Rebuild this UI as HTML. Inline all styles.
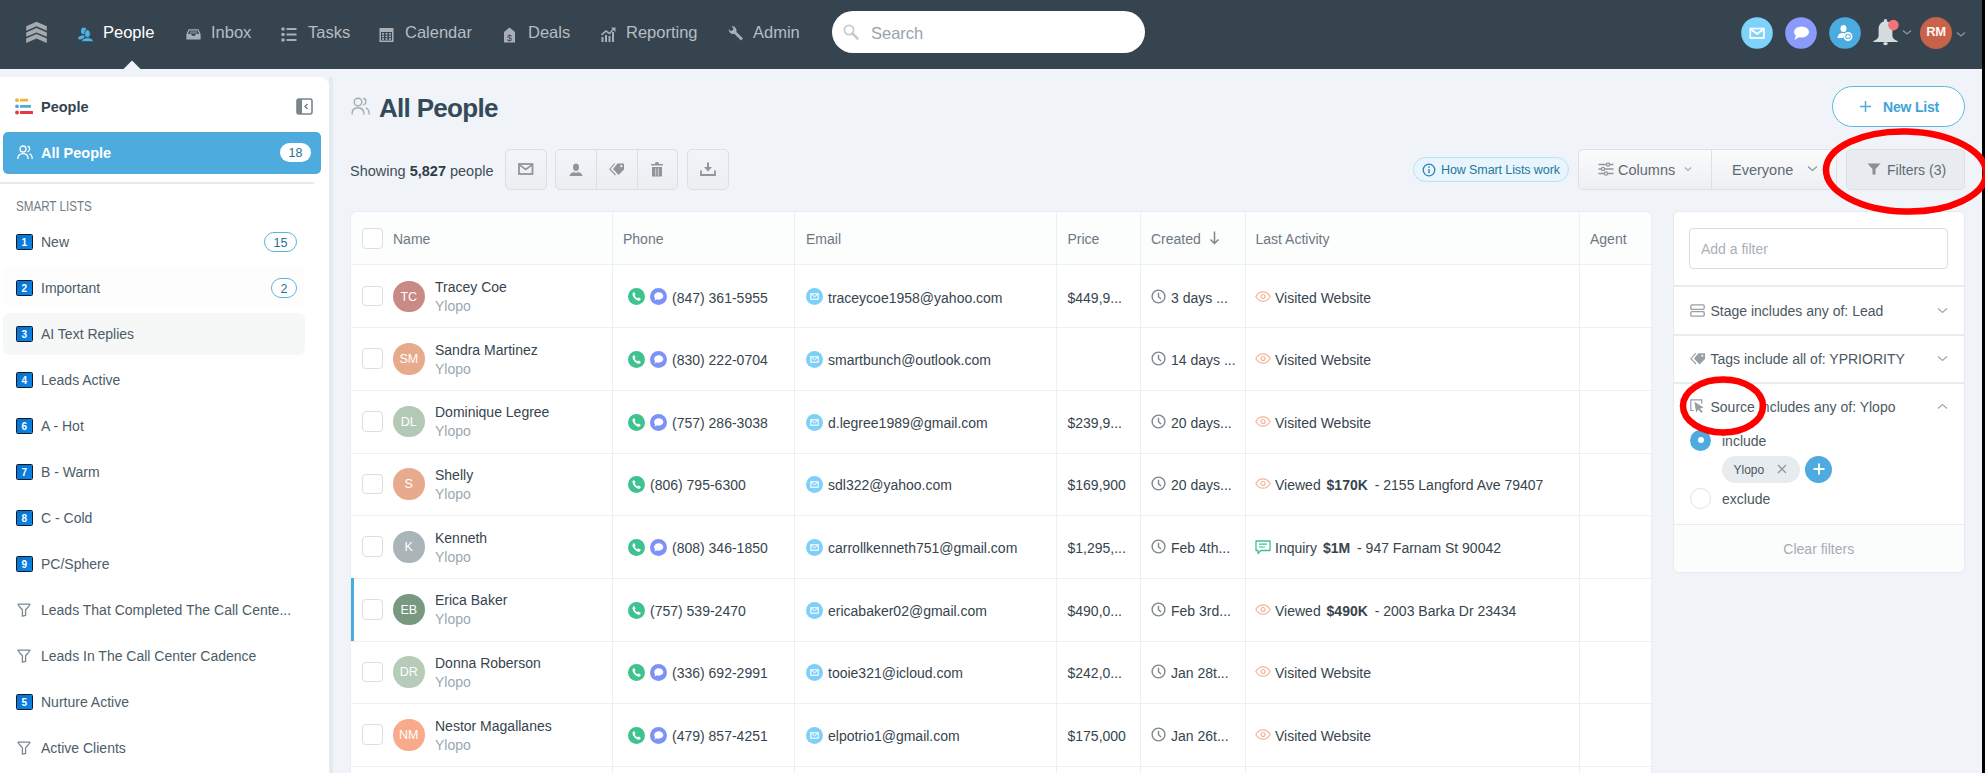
<!DOCTYPE html><html><head><meta charset="utf-8"><style>
*{box-sizing:border-box;margin:0;padding:0}
html,body{width:1985px;height:773px;overflow:hidden;background:#F0F3F8;font-family:"Liberation Sans", sans-serif;}
.a{position:absolute}
.t{position:absolute;white-space:nowrap;line-height:1}
b{font-weight:700}
</style></head><body>
<div class="a" style="left:0;top:0;width:1985px;height:69px;background:#36444F"></div>
<svg class="a" style="left:122px;top:59px" width="20" height="11"><polygon points="1,10.5 10,1.5 19,10.5" fill="#F0F3F8"/></svg>
<svg class="a" style="left:24px;top:20px" width="25" height="25" viewBox="0 0 25 25">
      <g fill="#A6AAAE">
      <path d="M2.2 6.3 L12.5 1.8 L22.8 6.3 L22.8 10.7 L12.5 6.3 L2.2 10.7Z"/>
      <path d="M2.2 12.4 L12.5 7.9 L22.8 12.4 L22.8 16.8 L12.5 12.4 L2.2 16.8Z"/>
      <path d="M2.2 18.5 L12.5 14.0 L22.8 18.5 L22.8 22.9 L12.5 18.5 L2.2 22.9Z"/>
      </g></svg>
<svg class="a" style="left:78px;top:27px" width="16" height="15" viewBox="0 0 16 15">
      <g fill="#4DB3E6">
      <ellipse cx="5.7" cy="3.9" rx="2.6" ry="3.3"/>
      <ellipse cx="3.4" cy="10.3" rx="3.4" ry="1.7" transform="rotate(-22 3.4 10.3)"/>
      <ellipse cx="9.4" cy="6.7" rx="2.9" ry="3.9" stroke="#36444F" stroke-width="0.8"/>
      <path d="M3.4 14.5 C4 11.8 6.5 10.7 9.4 10.7 C12.3 10.7 14.8 11.8 15.4 14.5Z" stroke="#36444F" stroke-width="0.6"/>
      </g></svg>
<div class="t" style="left:103px;top:24px;font-size:16.5px;color:#FFFFFF">People</div>
<svg class="a" style="left:186px;top:29px" width="15" height="11" viewBox="0 0 15 11">
      <path d="M2.6 0.3 H12.4 L14.6 5 V10.6 H0.4 V5Z" fill="#A9B0B5"/>
      <path d="M3.3 1.5 H11.7 L13.1 5 H9.9 C9.6 6.3 8.7 6.9 7.5 6.9 C6.3 6.9 5.4 6.3 5.1 5 H1.9Z" fill="#36444F"/>
      <rect x="3.9" y="2.6" width="7.2" height="0.9" fill="#A9B0B5"/><rect x="3.5" y="3.9" width="8" height="0.7" fill="#7E878D"/>
      </svg>
<div class="t" style="left:211px;top:24px;font-size:16.5px;color:#B5BDC3">Inbox</div>
<svg class="a" style="left:281px;top:27px" width="16" height="15" viewBox="0 0 16 15">
      <g fill="#A9B0B5"><circle cx="2" cy="2" r="1.8"/><circle cx="2" cy="7.5" r="1.8"/><circle cx="2" cy="13" r="1.8"/>
      <rect x="5.5" y="1" width="10" height="2"/><rect x="5.5" y="6.5" width="10" height="2"/><rect x="5.5" y="12" width="10" height="2"/></g></svg>
<div class="t" style="left:308px;top:24px;font-size:16.5px;color:#B5BDC3">Tasks</div>
<svg class="a" style="left:379px;top:27px" width="15" height="15" viewBox="0 0 15 15">
      <rect x="0.5" y="1" width="14" height="14" fill="#A9B0B5"/>
      <rect x="2" y="5" width="11" height="8.5" fill="#36444F"/>
      <g fill="#A9B0B5"><rect x="3" y="6" width="2" height="1.6"/><rect x="6.5" y="6" width="2" height="1.6"/><rect x="10" y="6" width="2" height="1.6"/>
      <rect x="3" y="8.6" width="2" height="1.6"/><rect x="6.5" y="8.6" width="2" height="1.6"/><rect x="10" y="8.6" width="2" height="1.6"/>
      <rect x="3" y="11.2" width="2" height="1.6"/><rect x="6.5" y="11.2" width="2" height="1.6"/><rect x="10" y="11.2" width="2" height="1.6"/></g>
      </svg>
<div class="t" style="left:405px;top:24px;font-size:16.5px;color:#B5BDC3">Calendar</div>
<svg class="a" style="left:503px;top:27px" width="13" height="16" viewBox="0 0 13 16">
      <path d="M6.5 0.5 L12 5 V15.5 H1 V5Z" fill="#A9B0B5"/>
      <text x="6.5" y="14" font-size="9" font-family="Liberation Sans" text-anchor="middle" fill="#36444F">$</text></svg>
<div class="t" style="left:528px;top:24px;font-size:16.5px;color:#B5BDC3">Deals</div>
<svg class="a" style="left:601px;top:27px" width="15" height="15" viewBox="0 0 15 15">
      <g fill="#A9B0B5"><rect x="0.5" y="10" width="2" height="5"/><rect x="4" y="8" width="2" height="7"/><rect x="7.5" y="9" width="2" height="6"/><rect x="11" y="5" width="2" height="10"/></g>
      <path d="M0.5 8 L5 4 L8.5 6.5 L13 1.5" stroke="#A9B0B5" stroke-width="1.6" fill="none"/><path d="M10 0.5 H14.5 V5Z" fill="#A9B0B5"/></svg>
<div class="t" style="left:626px;top:24px;font-size:16.5px;color:#B5BDC3">Reporting</div>
<svg class="a" style="left:728px;top:26px" width="16" height="16" viewBox="0 0 16 16">
      <path d="M1 3 A4 4 0 0 0 6.3 7.7 L13 14.5 L15 12.5 L8.3 5.7 A4 4 0 0 0 3.5 0.5 L5.5 2.5 L4.5 4.5 L2.5 5Z" fill="#A9B0B5"/></svg>
<div class="t" style="left:753px;top:24px;font-size:16.5px;color:#B5BDC3">Admin</div>
<div class="a" style="left:832px;top:11px;width:313px;height:42px;border-radius:21px;background:#FFFFFF"></div>
<svg class="a" style="left:843px;top:24px" width="16" height="16" viewBox="0 0 16 16">
      <circle cx="6" cy="6" r="4.6" stroke="#C4CCD2" stroke-width="1.8" fill="none"/><path d="M9.5 9.5 L14.5 14.5" stroke="#C4CCD2" stroke-width="2.6" stroke-linecap="round"/></svg>
<div class="t" style="left:871px;top:25px;font-size:16.5px;color:#97A3AD">Search</div>
<svg class="a" style="left:1741px;top:16.5px" width="32" height="32" viewBox="0 0 32 32">
      <circle cx="16" cy="16" r="15.8" fill="#7FD3FB"/>
      <rect x="9.3" y="11.6" width="13.6" height="9.4" fill="none" stroke="#FFFFFF" stroke-width="1.7"/>
      <path d="M9.6 12.2 L16.1 16.8 L22.6 12.2" fill="none" stroke="#FFFFFF" stroke-width="1.8"/></svg>
<svg class="a" style="left:1785px;top:16.5px" width="32" height="32" viewBox="0 0 32 32">
      <circle cx="16" cy="16" r="15.8" fill="#8A9BFB"/>
      <ellipse cx="16.5" cy="15" rx="7.5" ry="5.5" fill="#FFFFFF"/><path d="M11 18 L9.5 23 L15 19.5Z" fill="#FFFFFF"/></svg>
<svg class="a" style="left:1829px;top:16.5px" width="32" height="32" viewBox="0 0 32 32">
      <circle cx="16" cy="16" r="15.8" fill="#4AABDE"/>
      <ellipse cx="14.5" cy="11.5" rx="3" ry="3.5" fill="#FFFFFF"/><path d="M8.5 21 C9 17 11 16 14.5 16 L16 16.5 L14 21Z" fill="#FFFFFF"/>
      <circle cx="19" cy="19.5" r="3.6" fill="none" stroke="#FFFFFF" stroke-width="1.8"/><path d="M19 17.5 V21.5 M17 19.5 H21" stroke="#FFFFFF" stroke-width="1.4"/></svg>
<svg class="a" style="left:1872px;top:18px" width="28" height="28" viewBox="0 0 28 28">
      <circle cx="13.5" cy="2.8" r="1.7" fill="#D6DBDE"/>
      <path d="M13.5 3.3 C8.8 3.3 6.6 7 6.6 11.5 V18 C6.6 20.5 4 22 1.3 23 V24 H25.7 V23 C23 22 20.4 20.5 20.4 18 V11.5 C20.4 7 18.2 3.3 13.5 3.3Z" fill="#D6DBDE"/>
      <ellipse cx="13.5" cy="25.6" rx="2.3" ry="1.7" fill="#D6DBDE"/>
      <circle cx="21.4" cy="7.1" r="5.3" fill="#F07479"/></svg>
<svg class="a" style="left:1902px;top:29px" width="10" height="7" viewBox="0 0 10 7"><path d="M1 1.5 L5 5 L9 1.5" stroke="#8E99A2" stroke-width="1.3" fill="none"/></svg>
<div class="a" style="left:1920px;top:16.5px;width:32px;height:32px;border-radius:50%;background:#C8624A"></div>
<div class="t" style="left:1920px;top:25px;width:32px;text-align:center;font-size:13px;font-weight:700;color:#FFF6F0;letter-spacing:-0.4px">RM</div>
<svg class="a" style="left:1956px;top:31px" width="10" height="7" viewBox="0 0 10 7"><path d="M1 1.5 L5 5 L9 1.5" stroke="#8E99A2" stroke-width="1.3" fill="none"/></svg>
<div class="a" style="left:1982px;top:0;width:3px;height:773px;background:#000000"></div>
<div class="a" style="left:329px;top:77px;width:4px;height:696px;background:#E6E9EE"></div>
<div class="a" style="left:0;top:77px;width:329px;height:696px;background:#FFFFFF;border-top-right-radius:9px"></div>
<svg class="a" style="left:15px;top:98px" width="18" height="17" viewBox="0 0 18 17">
      <circle cx="2" cy="2.2" r="1.9" fill="#F4B22E"/><rect x="5" y="0.8" width="8" height="2.8" rx="0.5" fill="#F4B22E"/>
      <circle cx="2" cy="8.3" r="1.9" fill="#4BABDD"/><rect x="5" y="6.9" width="11" height="2.8" rx="0.5" fill="#4BABDD"/>
      <circle cx="2" cy="14.5" r="1.9" fill="#E5383B"/><rect x="5" y="13.1" width="13" height="2.8" rx="0.5" fill="#E5383B"/></svg>
<div class="t" style="left:41px;top:100px;font-size:14.5px;font-weight:700;color:#34434E">People</div>
<svg class="a" style="left:296px;top:98px" width="17" height="17" viewBox="0 0 17 17">
      <rect x="1" y="1" width="15" height="15" rx="2" fill="none" stroke="#78858E" stroke-width="1.6"/>
      <rect x="1" y="1" width="5" height="15" fill="#78858E"/>
      <path d="M11.5 6 L9 8.5 L11.5 11" fill="none" stroke="#78858E" stroke-width="1.5"/></svg>
<div class="a" style="left:3px;top:131.5px;width:318px;height:42px;background:#4EABDD;border-radius:5px"></div>
<svg class="a" style="left:17px;top:145px" width="16" height="15" viewBox="0 0 16 15">
      <g fill="none" stroke="#FFFFFF" stroke-width="1.3"><circle cx="6" cy="4" r="3"/><path d="M0.8 14 C0.8 10 3 8.6 6 8.6 C9 8.6 11.2 10 11.2 14"/>
      <path d="M10.5 1.2 C12.2 1.6 12.8 3 12.6 4.2 C12.4 5.6 11.5 6.6 10.5 6.9"/><path d="M12.5 8.8 C14.3 9.5 15.2 11 15.2 14"/></g></svg>
<div class="t" style="left:41px;top:146px;font-size:14.5px;font-weight:700;color:#FFFFFF">All People</div>
<div class="a" style="left:280px;top:143px;width:31px;height:19px;border-radius:10px;background:#FFFFFF"></div>
<div class="t" style="left:280px;top:147px;width:31px;text-align:center;font-size:12.5px;color:#2D6F90">18</div>
<div class="a" style="left:0;top:182px;width:314px;height:2px;background:#E8EBEE"></div>
<div class="t" style="left:16px;top:198.6px;font-size:14px;color:#6E7D88;transform:scaleX(0.83);transform-origin:0 0">SMART LISTS</div>
<div class="a" style="left:3px;top:267px;width:302px;height:41px;background:#FDFDFD;border-radius:6px"></div>
<div class="a" style="left:3px;top:313px;width:302px;height:42px;background:#F6F7F7;border-radius:6px"></div>
<div class="a" style="left:16px;top:233.5px;width:16.5px;height:16.5px;background:linear-gradient(135deg,#0A6FC9,#0A86EC);border:1.2px solid #0F1A26;border-radius:1.5px;"></div><div class="t" style="left:16px;top:237.7px;width:16.5px;text-align:center;font-size:10px;font-weight:700;color:#FFFFFF">1</div>
<div class="t" style="left:41px;top:235.2px;font-size:14px;color:#4C5C68">New</div>
<div class="a" style="left:264px;top:232px;width:33px;height:20px;border-radius:10px;border:1.5px solid #5BB3DF;background:#FFFFFF"></div>
<div class="t" style="left:264px;top:236.5px;width:33px;text-align:center;font-size:12.5px;color:#2D6F90">15</div>
<div class="a" style="left:16px;top:279.5px;width:16.5px;height:16.5px;background:linear-gradient(135deg,#0A6FC9,#0A86EC);border:1.2px solid #0F1A26;border-radius:1.5px;"></div><div class="t" style="left:16px;top:283.7px;width:16.5px;text-align:center;font-size:10px;font-weight:700;color:#FFFFFF">2</div>
<div class="t" style="left:41px;top:281.2px;font-size:14px;color:#4C5C68">Important</div>
<div class="a" style="left:271px;top:278px;width:26px;height:20px;border-radius:10px;border:1.5px solid #5BB3DF;background:#FFFFFF"></div>
<div class="t" style="left:271px;top:282.5px;width:26px;text-align:center;font-size:12.5px;color:#2D6F90">2</div>
<div class="a" style="left:16px;top:325.5px;width:16.5px;height:16.5px;background:linear-gradient(135deg,#0A6FC9,#0A86EC);border:1.2px solid #0F1A26;border-radius:1.5px;"></div><div class="t" style="left:16px;top:329.7px;width:16.5px;text-align:center;font-size:10px;font-weight:700;color:#FFFFFF">3</div>
<div class="t" style="left:41px;top:327.2px;font-size:14px;color:#4C5C68">AI Text Replies</div>
<div class="a" style="left:16px;top:371.5px;width:16.5px;height:16.5px;background:linear-gradient(135deg,#0A6FC9,#0A86EC);border:1.2px solid #0F1A26;border-radius:1.5px;"></div><div class="t" style="left:16px;top:375.7px;width:16.5px;text-align:center;font-size:10px;font-weight:700;color:#FFFFFF">4</div>
<div class="t" style="left:41px;top:373.2px;font-size:14px;color:#4C5C68">Leads Active</div>
<div class="a" style="left:16px;top:417.5px;width:16.5px;height:16.5px;background:linear-gradient(135deg,#0A6FC9,#0A86EC);border:1.2px solid #0F1A26;border-radius:1.5px;"></div><div class="t" style="left:16px;top:421.7px;width:16.5px;text-align:center;font-size:10px;font-weight:700;color:#FFFFFF">6</div>
<div class="t" style="left:41px;top:419.2px;font-size:14px;color:#4C5C68">A - Hot</div>
<div class="a" style="left:16px;top:463.5px;width:16.5px;height:16.5px;background:linear-gradient(135deg,#0A6FC9,#0A86EC);border:1.2px solid #0F1A26;border-radius:1.5px;"></div><div class="t" style="left:16px;top:467.7px;width:16.5px;text-align:center;font-size:10px;font-weight:700;color:#FFFFFF">7</div>
<div class="t" style="left:41px;top:465.2px;font-size:14px;color:#4C5C68">B - Warm</div>
<div class="a" style="left:16px;top:509.5px;width:16.5px;height:16.5px;background:linear-gradient(135deg,#0A6FC9,#0A86EC);border:1.2px solid #0F1A26;border-radius:1.5px;"></div><div class="t" style="left:16px;top:513.7px;width:16.5px;text-align:center;font-size:10px;font-weight:700;color:#FFFFFF">8</div>
<div class="t" style="left:41px;top:511.2px;font-size:14px;color:#4C5C68">C - Cold</div>
<div class="a" style="left:16px;top:555.5px;width:16.5px;height:16.5px;background:linear-gradient(135deg,#0A6FC9,#0A86EC);border:1.2px solid #0F1A26;border-radius:1.5px;"></div><div class="t" style="left:16px;top:559.7px;width:16.5px;text-align:center;font-size:10px;font-weight:700;color:#FFFFFF">9</div>
<div class="t" style="left:41px;top:557.2px;font-size:14px;color:#4C5C68">PC/Sphere</div>
<svg class="a" style="left:17px;top:603px" width="14" height="14" viewBox="0 0 14 14"><path d="M1 1.2 H13 C12.5 3 10 5 8.6 6.8 V12.3 L5.4 13.2 V6.8 C4 5 1.5 3 1 1.2Z" fill="none" stroke="#7A8891" stroke-width="1.3" stroke-linejoin="round"/></svg>
<div class="t" style="left:41px;top:603.2px;font-size:14px;color:#4C5C68">Leads That Completed The Call Cente...</div>
<svg class="a" style="left:17px;top:649px" width="14" height="14" viewBox="0 0 14 14"><path d="M1 1.2 H13 C12.5 3 10 5 8.6 6.8 V12.3 L5.4 13.2 V6.8 C4 5 1.5 3 1 1.2Z" fill="none" stroke="#7A8891" stroke-width="1.3" stroke-linejoin="round"/></svg>
<div class="t" style="left:41px;top:649.2px;font-size:14px;color:#4C5C68">Leads In The Call Center Cadence</div>
<div class="a" style="left:16px;top:693.5px;width:16.5px;height:16.5px;background:linear-gradient(135deg,#0A6FC9,#0A86EC);border:1.2px solid #0F1A26;border-radius:1.5px;"></div><div class="t" style="left:16px;top:697.7px;width:16.5px;text-align:center;font-size:10px;font-weight:700;color:#FFFFFF">5</div>
<div class="t" style="left:41px;top:695.2px;font-size:14px;color:#4C5C68">Nurture Active</div>
<svg class="a" style="left:17px;top:741px" width="14" height="14" viewBox="0 0 14 14"><path d="M1 1.2 H13 C12.5 3 10 5 8.6 6.8 V12.3 L5.4 13.2 V6.8 C4 5 1.5 3 1 1.2Z" fill="none" stroke="#7A8891" stroke-width="1.3" stroke-linejoin="round"/></svg>
<div class="t" style="left:41px;top:741.2px;font-size:14px;color:#4C5C68">Active Clients</div>
<svg class="a" style="left:351px;top:97px" width="19" height="18" viewBox="0 0 19 18">
      <g fill="none" stroke="#A3ADB4" stroke-width="1.4"><circle cx="7" cy="5" r="3.8"/><path d="M1 17.5 C1 12.5 3.5 10.8 7 10.8 C10.5 10.8 13 12.5 13 17.5"/>
      <path d="M12.2 1.2 C14.3 1.7 15.1 3.4 14.9 4.9 C14.7 6.6 13.6 7.8 12.3 8.2"/><path d="M14.8 10.8 C17 11.7 18.2 13.6 18.2 17.5"/></g></svg>
<div class="t" style="left:379px;top:95px;font-size:26px;font-weight:700;color:#34495A;letter-spacing:-0.7px">All People</div>
<div class="a" style="left:1831.5px;top:85.5px;width:133px;height:41.5px;border-radius:21px;border:1.5px solid #5EB6E2;background:#FFFFFF"></div>
<svg class="a" style="left:1859px;top:100px" width="13" height="13" viewBox="0 0 13 13"><path d="M6.5 1 V12 M1 6.5 H12" stroke="#4BABDD" stroke-width="1.5"/></svg>
<div class="t" style="left:1883px;top:99.5px;font-size:14px;font-weight:700;color:#3FA3D8;letter-spacing:-0.2px">New List</div>
<div class="t" style="left:350px;top:163.5px;font-size:14.5px;color:#414E57">Showing <b style="color:#2F3D47">5,827</b> people</div>
<div class="a" style="left:505px;top:148.5px;width:41.5px;height:41px;background:linear-gradient(#F2F4F7,#ECEFF2);border:1.3px solid #DADFE4;border-radius:5px"></div>
<div class="a" style="left:555px;top:148.5px;width:123px;height:41px;background:linear-gradient(#F2F4F7,#ECEFF2);border:1.3px solid #DADFE4;border-radius:5px"></div>
<div class="a" style="left:596px;top:149px;width:1.3px;height:40px;background:#DADFE4"></div>
<div class="a" style="left:636.7px;top:149px;width:1.3px;height:40px;background:#DADFE4"></div>
<div class="a" style="left:687px;top:148.5px;width:41.5px;height:41px;background:linear-gradient(#F2F4F7,#ECEFF2);border:1.3px solid #DADFE4;border-radius:5px"></div>
<svg class="a" style="left:518px;top:163px" width="16" height="12" viewBox="0 0 16 12">
      <rect x="1" y="1" width="13.5" height="10" fill="none" stroke="#8F959B" stroke-width="1.8"/><path d="M1.5 1.8 L7.75 6.5 L14 1.8" fill="none" stroke="#8F959B" stroke-width="1.6"/></svg>
<svg class="a" style="left:569px;top:163px" width="14" height="14" viewBox="0 0 14 14">
      <ellipse cx="7" cy="4.2" rx="3" ry="3.8" fill="#8F959B"/><path d="M0.5 13 C0.8 10.5 3 9.5 5 9 L7 10 L9 9 C11 9.5 13.2 10.5 13.5 13Z" fill="#8F959B"/></svg>
<svg class="a" style="left:609px;top:162px" width="16" height="14" viewBox="0 0 16 14">
      <path d="M4 7 L8.5 1.5 H15 V7.5 L9.5 13Z" fill="#8F959B"/><circle cx="12.3" cy="4.2" r="1.1" fill="#EEF1F4"/>
      <path d="M5.8 1.5 L0.8 7.2 L6.5 13" fill="none" stroke="#8F959B" stroke-width="1.1"/></svg>
<svg class="a" style="left:650px;top:161px" width="14" height="16" viewBox="0 0 14 16">
      <rect x="1" y="3" width="12" height="1.5" rx="0.6" fill="#8F959B"/><path d="M5 3 C5 1.3 5.8 0.9 7 0.9 C8.2 0.9 9 1.3 9 3Z" fill="#8F959B"/>
      <path d="M2 6 H12 V15 C12 15.4 11.6 15.6 11.2 15.6 H2.8 C2.4 15.6 2 15.4 2 15Z" fill="#8F959B"/><path d="M5.6 7.2 V14.4 M8.4 7.2 V14.4" stroke="#C6CACE" stroke-width="1.1"/></svg>
<svg class="a" style="left:700px;top:162px" width="16" height="14" viewBox="0 0 16 14">
      <path d="M8 0.5 V8" stroke="#8F959B" stroke-width="2"/><path d="M4 5 L8 9.5 L12 5Z" fill="#8F959B"/>
      <path d="M1 8.5 V13 H15 V8.5" fill="none" stroke="#8F959B" stroke-width="1.8"/></svg>
<div class="a" style="left:1412.5px;top:157px;width:156px;height:24.5px;border-radius:12.5px;border:1.2px solid #B9E0F4;background:#E9F5FC"></div>
<svg class="a" style="left:1422px;top:162.5px" width="14" height="14" viewBox="0 0 14 14"><circle cx="7" cy="7" r="5.8" fill="none" stroke="#2A85B3" stroke-width="1.3"/><path d="M7 6 V10.3" stroke="#2A85B3" stroke-width="1.4"/><circle cx="7" cy="4" r="0.85" fill="#2A85B3"/></svg>
<div class="t" style="left:1441px;top:163.5px;font-size:12.5px;color:#23789F;letter-spacing:-0.1px">How Smart Lists work</div>
<div class="a" style="left:1578px;top:148.5px;width:259px;height:41px;border:1.3px solid #DDE1E5;border-radius:5px;background:linear-gradient(#FAFBFC,#EDEFF2)"></div>
<div class="a" style="left:1711px;top:149px;width:1.3px;height:40px;background:#DDE1E5"></div>
<svg class="a" style="left:1598px;top:162px" width="16" height="14" viewBox="0 0 16 14">
      <g stroke="#8E969C" stroke-width="1.3" fill="none"><path d="M0.5 2.5 H15.5 M0.5 7 H15.5 M0.5 11.5 H15.5"/></g>
      <g fill="#EEF0F2" stroke="#8E969C" stroke-width="1.2"><circle cx="10" cy="2.5" r="1.6"/><circle cx="5" cy="7" r="1.6"/><circle cx="8" cy="11.5" r="1.6"/></g></svg>
<div class="t" style="left:1618px;top:162.5px;font-size:14.5px;color:#5F6B74">Columns</div>
<svg class="a" style="left:1684px;top:166px" width="8" height="6" viewBox="0 0 8 6"><path d="M1 1.5 L4 4.5 L7 1.5" stroke="#A5ADB3" stroke-width="1.1" fill="none"/></svg>
<div class="t" style="left:1732px;top:162.5px;font-size:14.5px;color:#5F6B74">Everyone</div>
<svg class="a" style="left:1807px;top:165px" width="11" height="7" viewBox="0 0 11 7"><path d="M1 1.5 L5.5 5.5 L10 1.5" stroke="#8E969C" stroke-width="1.2" fill="none"/></svg>
<div class="a" style="left:1846px;top:148.5px;width:118.5px;height:41px;border:1.3px solid #DDE1E5;border-radius:5px;background:#E8EBEF"></div>
<svg class="a" style="left:1867px;top:163px" width="14" height="12" viewBox="0 0 14 12"><path d="M0.5 0.5 H13.5 L8.5 6 V11.5 H5.5 V6Z" fill="#8A9095"/></svg>
<div class="t" style="left:1887px;top:163px;font-size:14px;color:#5F6B74">Filters (3)</div>
<div class="a" style="left:351px;top:212px;width:1300px;height:600px;background:#FFFFFF;border-radius:6px 6px 0 0;box-shadow:0 0 0 1px #E9EDF1"></div>
<div class="a" style="left:351px;top:212px;width:1300px;height:52.5px;background:#FCFDFD;border-radius:6px 6px 0 0"></div>
<div class="a" style="left:611.5px;top:212px;width:1px;height:561px;background:#EDF0F3"></div>
<div class="a" style="left:794px;top:212px;width:1px;height:561px;background:#EDF0F3"></div>
<div class="a" style="left:1056px;top:212px;width:1px;height:561px;background:#EDF0F3"></div>
<div class="a" style="left:1139.5px;top:212px;width:1px;height:561px;background:#EDF0F3"></div>
<div class="a" style="left:1244.5px;top:212px;width:1px;height:561px;background:#EDF0F3"></div>
<div class="a" style="left:1578.5px;top:212px;width:1px;height:561px;background:#EDF0F3"></div>
<div class="a" style="left:351px;top:264px;width:1300px;height:1px;background:#EDF0F3"></div>
<div class="a" style="left:351px;top:327px;width:1300px;height:1px;background:#EDF0F3"></div>
<div class="a" style="left:351px;top:390px;width:1300px;height:1px;background:#EDF0F3"></div>
<div class="a" style="left:351px;top:453px;width:1300px;height:1px;background:#EDF0F3"></div>
<div class="a" style="left:351px;top:515px;width:1300px;height:1px;background:#EDF0F3"></div>
<div class="a" style="left:351px;top:578px;width:1300px;height:1px;background:#EDF0F3"></div>
<div class="a" style="left:351px;top:641px;width:1300px;height:1px;background:#EDF0F3"></div>
<div class="a" style="left:351px;top:703px;width:1300px;height:1px;background:#EDF0F3"></div>
<div class="a" style="left:351px;top:766px;width:1300px;height:1px;background:#EDF0F3"></div>
<div class="a" style="left:362px;top:228px;width:20.5px;height:20.5px;border:1.4px solid #D9DFE4;border-radius:4px;background:#FFFFFF"></div>
<div class="t" style="left:393px;top:232px;font-size:14px;color:#6C7882">Name</div>
<div class="t" style="left:623px;top:232px;font-size:14px;color:#6C7882">Phone</div>
<div class="t" style="left:806px;top:232px;font-size:14px;color:#6C7882">Email</div>
<div class="t" style="left:1067.5px;top:232px;font-size:14px;color:#6C7882">Price</div>
<div class="t" style="left:1151px;top:232px;font-size:14px;color:#6C7882">Created</div>
<div class="t" style="left:1255.5px;top:232px;font-size:14px;color:#6C7882">Last Activity</div>
<div class="t" style="left:1590px;top:232px;font-size:14px;color:#6C7882">Agent</div>
<svg class="a" style="left:1209px;top:231px" width="11" height="14" viewBox="0 0 11 14"><path d="M5.5 0.5 V12.5 M1.5 8.5 L5.5 12.5 L9.5 8.5" stroke="#7C868E" stroke-width="1.5" fill="none"/></svg>
<div class="a" style="left:362px;top:285.70px;width:20.5px;height:20.5px;border:1.4px solid #D9DFE4;border-radius:4px;background:#FFFFFF"></div>
<div class="a" style="left:393px;top:280.50px;width:31.5px;height:31.5px;border-radius:50%;background:#C98A86"></div>
<div class="t" style="left:393px;top:290.50px;width:31.5px;text-align:center;font-size:12.5px;color:#FFFFFF">TC</div>
<div class="t" style="left:435px;top:280.00px;font-size:14px;color:#37444E">Tracey Coe</div>
<div class="t" style="left:435px;top:299.00px;font-size:14px;color:#9BA7B0">Ylopo</div>
<svg class="a" style="left:628px;top:288.20px" width="17" height="17" viewBox="0 0 17 17"><circle cx="8.5" cy="8.5" r="8.5" fill="#3EC28F"/>
          <path d="M5.2 4.6 C5.6 4.2 6.3 4.2 6.6 4.7 L7.3 6 C7.5 6.4 7.4 6.8 7.1 7.1 L6.7 7.5 C7.1 8.6 8.2 9.8 9.4 10.3 L9.9 9.9 C10.2 9.6 10.6 9.5 11 9.7 L12.3 10.4 C12.8 10.7 12.8 11.4 12.4 11.8 L11.7 12.5 C10.9 13.2 9.5 12.9 7.9 11.6 C6.3 10.2 4.8 8.3 4.5 6.7 C4.4 5.9 4.6 5.2 5.2 4.6Z" fill="#FFFFFF"/></svg>
<svg class="a" style="left:650px;top:288.20px" width="17" height="17" viewBox="0 0 17 17"><circle cx="8.5" cy="8.5" r="8.5" fill="#7D92F8"/>
              <ellipse cx="8.7" cy="8" rx="4.6" ry="3.7" fill="#FFFFFF"/><path d="M5.3 9.5 L4.6 12.6 L8 10.8Z" fill="#FFFFFF"/></svg>
<div class="t" style="left:672px;top:290.50px;font-size:14px;color:#37444E">(847) 361-5955</div>
<svg class="a" style="left:806px;top:288.20px" width="17" height="17" viewBox="0 0 17 17"><circle cx="8.5" cy="8.5" r="8.5" fill="#7FD0F8"/>
          <rect x="4.8" y="5.8" width="7.4" height="5.4" fill="none" stroke="#FFFFFF" stroke-width="1.1"/><path d="M5 6.2 L8.5 8.8 L12 6.2" fill="none" stroke="#FFFFFF" stroke-width="1"/></svg>
<div class="t" style="left:828px;top:290.50px;font-size:14px;color:#37444E">traceycoe1958@yahoo.com</div>
<div class="t" style="left:1067.5px;top:290.50px;font-size:14px;color:#37444E">$449,9...</div>
<svg class="a" style="left:1151px;top:288.50px" width="15" height="15" viewBox="0 0 15 15"><circle cx="7.5" cy="7.5" r="6.4" fill="none" stroke="#7D868D" stroke-width="1.4"/>
          <path d="M7.5 3.8 V7.8 L10 10" fill="none" stroke="#7D868D" stroke-width="1.4"/></svg>
<div class="t" style="left:1171px;top:290.50px;font-size:14px;color:#37444E">3 days ...</div>
<svg class="a" style="left:1255px;top:290.50px" width="16" height="11" viewBox="0 0 16 11"><path d="M0.8 5.5 C3 1.8 5.5 0.8 8 0.8 C10.5 0.8 13 1.8 15.2 5.5 C13 9.2 10.5 10.2 8 10.2 C5.5 10.2 3 9.2 0.8 5.5Z" fill="none" stroke="#F5B496" stroke-width="1.2"/>
              <circle cx="8" cy="5.5" r="2" fill="none" stroke="#F5B496" stroke-width="1.2"/></svg>
<div class="t" style="left:1275px;top:290.50px;font-size:14px;color:#37444E">Visited Website</div>
<div class="a" style="left:362px;top:348.36px;width:20.5px;height:20.5px;border:1.4px solid #D9DFE4;border-radius:4px;background:#FFFFFF"></div>
<div class="a" style="left:393px;top:343.16px;width:31.5px;height:31.5px;border-radius:50%;background:#E8AA8C"></div>
<div class="t" style="left:393px;top:353.16px;width:31.5px;text-align:center;font-size:12.5px;color:#FFFFFF">SM</div>
<div class="t" style="left:435px;top:342.66px;font-size:14px;color:#37444E">Sandra Martinez</div>
<div class="t" style="left:435px;top:361.66px;font-size:14px;color:#9BA7B0">Ylopo</div>
<svg class="a" style="left:628px;top:350.86px" width="17" height="17" viewBox="0 0 17 17"><circle cx="8.5" cy="8.5" r="8.5" fill="#3EC28F"/>
          <path d="M5.2 4.6 C5.6 4.2 6.3 4.2 6.6 4.7 L7.3 6 C7.5 6.4 7.4 6.8 7.1 7.1 L6.7 7.5 C7.1 8.6 8.2 9.8 9.4 10.3 L9.9 9.9 C10.2 9.6 10.6 9.5 11 9.7 L12.3 10.4 C12.8 10.7 12.8 11.4 12.4 11.8 L11.7 12.5 C10.9 13.2 9.5 12.9 7.9 11.6 C6.3 10.2 4.8 8.3 4.5 6.7 C4.4 5.9 4.6 5.2 5.2 4.6Z" fill="#FFFFFF"/></svg>
<svg class="a" style="left:650px;top:350.86px" width="17" height="17" viewBox="0 0 17 17"><circle cx="8.5" cy="8.5" r="8.5" fill="#7D92F8"/>
              <ellipse cx="8.7" cy="8" rx="4.6" ry="3.7" fill="#FFFFFF"/><path d="M5.3 9.5 L4.6 12.6 L8 10.8Z" fill="#FFFFFF"/></svg>
<div class="t" style="left:672px;top:353.16px;font-size:14px;color:#37444E">(830) 222-0704</div>
<svg class="a" style="left:806px;top:350.86px" width="17" height="17" viewBox="0 0 17 17"><circle cx="8.5" cy="8.5" r="8.5" fill="#7FD0F8"/>
          <rect x="4.8" y="5.8" width="7.4" height="5.4" fill="none" stroke="#FFFFFF" stroke-width="1.1"/><path d="M5 6.2 L8.5 8.8 L12 6.2" fill="none" stroke="#FFFFFF" stroke-width="1"/></svg>
<div class="t" style="left:828px;top:353.16px;font-size:14px;color:#37444E">smartbunch@outlook.com</div>
<svg class="a" style="left:1151px;top:351.16px" width="15" height="15" viewBox="0 0 15 15"><circle cx="7.5" cy="7.5" r="6.4" fill="none" stroke="#7D868D" stroke-width="1.4"/>
          <path d="M7.5 3.8 V7.8 L10 10" fill="none" stroke="#7D868D" stroke-width="1.4"/></svg>
<div class="t" style="left:1171px;top:353.16px;font-size:14px;color:#37444E">14 days ...</div>
<svg class="a" style="left:1255px;top:353.16px" width="16" height="11" viewBox="0 0 16 11"><path d="M0.8 5.5 C3 1.8 5.5 0.8 8 0.8 C10.5 0.8 13 1.8 15.2 5.5 C13 9.2 10.5 10.2 8 10.2 C5.5 10.2 3 9.2 0.8 5.5Z" fill="none" stroke="#F5B496" stroke-width="1.2"/>
              <circle cx="8" cy="5.5" r="2" fill="none" stroke="#F5B496" stroke-width="1.2"/></svg>
<div class="t" style="left:1275px;top:353.16px;font-size:14px;color:#37444E">Visited Website</div>
<div class="a" style="left:362px;top:411.02px;width:20.5px;height:20.5px;border:1.4px solid #D9DFE4;border-radius:4px;background:#FFFFFF"></div>
<div class="a" style="left:393px;top:405.82px;width:31.5px;height:31.5px;border-radius:50%;background:#B3C9B5"></div>
<div class="t" style="left:393px;top:415.82px;width:31.5px;text-align:center;font-size:12.5px;color:#FFFFFF">DL</div>
<div class="t" style="left:435px;top:405.32px;font-size:14px;color:#37444E">Dominique Legree</div>
<div class="t" style="left:435px;top:424.32px;font-size:14px;color:#9BA7B0">Ylopo</div>
<svg class="a" style="left:628px;top:413.52px" width="17" height="17" viewBox="0 0 17 17"><circle cx="8.5" cy="8.5" r="8.5" fill="#3EC28F"/>
          <path d="M5.2 4.6 C5.6 4.2 6.3 4.2 6.6 4.7 L7.3 6 C7.5 6.4 7.4 6.8 7.1 7.1 L6.7 7.5 C7.1 8.6 8.2 9.8 9.4 10.3 L9.9 9.9 C10.2 9.6 10.6 9.5 11 9.7 L12.3 10.4 C12.8 10.7 12.8 11.4 12.4 11.8 L11.7 12.5 C10.9 13.2 9.5 12.9 7.9 11.6 C6.3 10.2 4.8 8.3 4.5 6.7 C4.4 5.9 4.6 5.2 5.2 4.6Z" fill="#FFFFFF"/></svg>
<svg class="a" style="left:650px;top:413.52px" width="17" height="17" viewBox="0 0 17 17"><circle cx="8.5" cy="8.5" r="8.5" fill="#7D92F8"/>
              <ellipse cx="8.7" cy="8" rx="4.6" ry="3.7" fill="#FFFFFF"/><path d="M5.3 9.5 L4.6 12.6 L8 10.8Z" fill="#FFFFFF"/></svg>
<div class="t" style="left:672px;top:415.82px;font-size:14px;color:#37444E">(757) 286-3038</div>
<svg class="a" style="left:806px;top:413.52px" width="17" height="17" viewBox="0 0 17 17"><circle cx="8.5" cy="8.5" r="8.5" fill="#7FD0F8"/>
          <rect x="4.8" y="5.8" width="7.4" height="5.4" fill="none" stroke="#FFFFFF" stroke-width="1.1"/><path d="M5 6.2 L8.5 8.8 L12 6.2" fill="none" stroke="#FFFFFF" stroke-width="1"/></svg>
<div class="t" style="left:828px;top:415.82px;font-size:14px;color:#37444E">d.legree1989@gmail.com</div>
<div class="t" style="left:1067.5px;top:415.82px;font-size:14px;color:#37444E">$239,9...</div>
<svg class="a" style="left:1151px;top:413.82px" width="15" height="15" viewBox="0 0 15 15"><circle cx="7.5" cy="7.5" r="6.4" fill="none" stroke="#7D868D" stroke-width="1.4"/>
          <path d="M7.5 3.8 V7.8 L10 10" fill="none" stroke="#7D868D" stroke-width="1.4"/></svg>
<div class="t" style="left:1171px;top:415.82px;font-size:14px;color:#37444E">20 days...</div>
<svg class="a" style="left:1255px;top:415.82px" width="16" height="11" viewBox="0 0 16 11"><path d="M0.8 5.5 C3 1.8 5.5 0.8 8 0.8 C10.5 0.8 13 1.8 15.2 5.5 C13 9.2 10.5 10.2 8 10.2 C5.5 10.2 3 9.2 0.8 5.5Z" fill="none" stroke="#F5B496" stroke-width="1.2"/>
              <circle cx="8" cy="5.5" r="2" fill="none" stroke="#F5B496" stroke-width="1.2"/></svg>
<div class="t" style="left:1275px;top:415.82px;font-size:14px;color:#37444E">Visited Website</div>
<div class="a" style="left:362px;top:473.68px;width:20.5px;height:20.5px;border:1.4px solid #D9DFE4;border-radius:4px;background:#FFFFFF"></div>
<div class="a" style="left:393px;top:468.48px;width:31.5px;height:31.5px;border-radius:50%;background:#E8AA8C"></div>
<div class="t" style="left:393px;top:478.48px;width:31.5px;text-align:center;font-size:12.5px;color:#FFFFFF">S</div>
<div class="t" style="left:435px;top:467.98px;font-size:14px;color:#37444E">Shelly</div>
<div class="t" style="left:435px;top:486.98px;font-size:14px;color:#9BA7B0">Ylopo</div>
<svg class="a" style="left:628px;top:476.18px" width="17" height="17" viewBox="0 0 17 17"><circle cx="8.5" cy="8.5" r="8.5" fill="#3EC28F"/>
          <path d="M5.2 4.6 C5.6 4.2 6.3 4.2 6.6 4.7 L7.3 6 C7.5 6.4 7.4 6.8 7.1 7.1 L6.7 7.5 C7.1 8.6 8.2 9.8 9.4 10.3 L9.9 9.9 C10.2 9.6 10.6 9.5 11 9.7 L12.3 10.4 C12.8 10.7 12.8 11.4 12.4 11.8 L11.7 12.5 C10.9 13.2 9.5 12.9 7.9 11.6 C6.3 10.2 4.8 8.3 4.5 6.7 C4.4 5.9 4.6 5.2 5.2 4.6Z" fill="#FFFFFF"/></svg>
<div class="t" style="left:650px;top:478.48px;font-size:14px;color:#37444E">(806) 795-6300</div>
<svg class="a" style="left:806px;top:476.18px" width="17" height="17" viewBox="0 0 17 17"><circle cx="8.5" cy="8.5" r="8.5" fill="#7FD0F8"/>
          <rect x="4.8" y="5.8" width="7.4" height="5.4" fill="none" stroke="#FFFFFF" stroke-width="1.1"/><path d="M5 6.2 L8.5 8.8 L12 6.2" fill="none" stroke="#FFFFFF" stroke-width="1"/></svg>
<div class="t" style="left:828px;top:478.48px;font-size:14px;color:#37444E">sdl322@yahoo.com</div>
<div class="t" style="left:1067.5px;top:478.48px;font-size:14px;color:#37444E">$169,900</div>
<svg class="a" style="left:1151px;top:476.48px" width="15" height="15" viewBox="0 0 15 15"><circle cx="7.5" cy="7.5" r="6.4" fill="none" stroke="#7D868D" stroke-width="1.4"/>
          <path d="M7.5 3.8 V7.8 L10 10" fill="none" stroke="#7D868D" stroke-width="1.4"/></svg>
<div class="t" style="left:1171px;top:478.48px;font-size:14px;color:#37444E">20 days...</div>
<svg class="a" style="left:1255px;top:478.48px" width="16" height="11" viewBox="0 0 16 11"><path d="M0.8 5.5 C3 1.8 5.5 0.8 8 0.8 C10.5 0.8 13 1.8 15.2 5.5 C13 9.2 10.5 10.2 8 10.2 C5.5 10.2 3 9.2 0.8 5.5Z" fill="none" stroke="#F5B496" stroke-width="1.2"/>
              <circle cx="8" cy="5.5" r="2" fill="none" stroke="#F5B496" stroke-width="1.2"/></svg>
<div class="t" style="left:1275px;top:478.48px;font-size:14px;color:#37444E">Viewed <b style="margin:0 3px 0 2px">$170K</b> - 2155 Langford Ave 79407</div>
<div class="a" style="left:362px;top:536.34px;width:20.5px;height:20.5px;border:1.4px solid #D9DFE4;border-radius:4px;background:#FFFFFF"></div>
<div class="a" style="left:393px;top:531.14px;width:31.5px;height:31.5px;border-radius:50%;background:#AAB4B9"></div>
<div class="t" style="left:393px;top:541.14px;width:31.5px;text-align:center;font-size:12.5px;color:#FFFFFF">K</div>
<div class="t" style="left:435px;top:530.64px;font-size:14px;color:#37444E">Kenneth</div>
<div class="t" style="left:435px;top:549.64px;font-size:14px;color:#9BA7B0">Ylopo</div>
<svg class="a" style="left:628px;top:538.84px" width="17" height="17" viewBox="0 0 17 17"><circle cx="8.5" cy="8.5" r="8.5" fill="#3EC28F"/>
          <path d="M5.2 4.6 C5.6 4.2 6.3 4.2 6.6 4.7 L7.3 6 C7.5 6.4 7.4 6.8 7.1 7.1 L6.7 7.5 C7.1 8.6 8.2 9.8 9.4 10.3 L9.9 9.9 C10.2 9.6 10.6 9.5 11 9.7 L12.3 10.4 C12.8 10.7 12.8 11.4 12.4 11.8 L11.7 12.5 C10.9 13.2 9.5 12.9 7.9 11.6 C6.3 10.2 4.8 8.3 4.5 6.7 C4.4 5.9 4.6 5.2 5.2 4.6Z" fill="#FFFFFF"/></svg>
<svg class="a" style="left:650px;top:538.84px" width="17" height="17" viewBox="0 0 17 17"><circle cx="8.5" cy="8.5" r="8.5" fill="#7D92F8"/>
              <ellipse cx="8.7" cy="8" rx="4.6" ry="3.7" fill="#FFFFFF"/><path d="M5.3 9.5 L4.6 12.6 L8 10.8Z" fill="#FFFFFF"/></svg>
<div class="t" style="left:672px;top:541.14px;font-size:14px;color:#37444E">(808) 346-1850</div>
<svg class="a" style="left:806px;top:538.84px" width="17" height="17" viewBox="0 0 17 17"><circle cx="8.5" cy="8.5" r="8.5" fill="#7FD0F8"/>
          <rect x="4.8" y="5.8" width="7.4" height="5.4" fill="none" stroke="#FFFFFF" stroke-width="1.1"/><path d="M5 6.2 L8.5 8.8 L12 6.2" fill="none" stroke="#FFFFFF" stroke-width="1"/></svg>
<div class="t" style="left:828px;top:541.14px;font-size:14px;color:#37444E">carrollkenneth751@gmail.com</div>
<div class="t" style="left:1067.5px;top:541.14px;font-size:14px;color:#37444E">$1,295,...</div>
<svg class="a" style="left:1151px;top:539.14px" width="15" height="15" viewBox="0 0 15 15"><circle cx="7.5" cy="7.5" r="6.4" fill="none" stroke="#7D868D" stroke-width="1.4"/>
          <path d="M7.5 3.8 V7.8 L10 10" fill="none" stroke="#7D868D" stroke-width="1.4"/></svg>
<div class="t" style="left:1171px;top:541.14px;font-size:14px;color:#37444E">Feb 4th...</div>
<svg class="a" style="left:1255px;top:539.64px" width="16" height="15" viewBox="0 0 16 15"><path d="M1 1 H15 V10.5 H6 L3 13.5 V10.5 H1Z" fill="none" stroke="#3EC28F" stroke-width="1.3" stroke-linejoin="round"/>
              <path d="M4 4.2 H12 M4 7 H10" stroke="#3EC28F" stroke-width="1.2"/></svg>
<div class="t" style="left:1275px;top:541.14px;font-size:14px;color:#37444E">Inquiry <b style="margin:0 3px 0 2px">$1M</b> - 947 Farnam St 90042</div>
<div class="a" style="left:362px;top:599.00px;width:20.5px;height:20.5px;border:1.4px solid #D9DFE4;border-radius:4px;background:#FFFFFF"></div>
<div class="a" style="left:393px;top:593.80px;width:31.5px;height:31.5px;border-radius:50%;background:#789980"></div>
<div class="t" style="left:393px;top:603.80px;width:31.5px;text-align:center;font-size:12.5px;color:#FFFFFF">EB</div>
<div class="t" style="left:435px;top:593.30px;font-size:14px;color:#37444E">Erica Baker</div>
<div class="t" style="left:435px;top:612.30px;font-size:14px;color:#9BA7B0">Ylopo</div>
<svg class="a" style="left:628px;top:601.50px" width="17" height="17" viewBox="0 0 17 17"><circle cx="8.5" cy="8.5" r="8.5" fill="#3EC28F"/>
          <path d="M5.2 4.6 C5.6 4.2 6.3 4.2 6.6 4.7 L7.3 6 C7.5 6.4 7.4 6.8 7.1 7.1 L6.7 7.5 C7.1 8.6 8.2 9.8 9.4 10.3 L9.9 9.9 C10.2 9.6 10.6 9.5 11 9.7 L12.3 10.4 C12.8 10.7 12.8 11.4 12.4 11.8 L11.7 12.5 C10.9 13.2 9.5 12.9 7.9 11.6 C6.3 10.2 4.8 8.3 4.5 6.7 C4.4 5.9 4.6 5.2 5.2 4.6Z" fill="#FFFFFF"/></svg>
<div class="t" style="left:650px;top:603.80px;font-size:14px;color:#37444E">(757) 539-2470</div>
<svg class="a" style="left:806px;top:601.50px" width="17" height="17" viewBox="0 0 17 17"><circle cx="8.5" cy="8.5" r="8.5" fill="#7FD0F8"/>
          <rect x="4.8" y="5.8" width="7.4" height="5.4" fill="none" stroke="#FFFFFF" stroke-width="1.1"/><path d="M5 6.2 L8.5 8.8 L12 6.2" fill="none" stroke="#FFFFFF" stroke-width="1"/></svg>
<div class="t" style="left:828px;top:603.80px;font-size:14px;color:#37444E">ericabaker02@gmail.com</div>
<div class="t" style="left:1067.5px;top:603.80px;font-size:14px;color:#37444E">$490,0...</div>
<svg class="a" style="left:1151px;top:601.80px" width="15" height="15" viewBox="0 0 15 15"><circle cx="7.5" cy="7.5" r="6.4" fill="none" stroke="#7D868D" stroke-width="1.4"/>
          <path d="M7.5 3.8 V7.8 L10 10" fill="none" stroke="#7D868D" stroke-width="1.4"/></svg>
<div class="t" style="left:1171px;top:603.80px;font-size:14px;color:#37444E">Feb 3rd...</div>
<svg class="a" style="left:1255px;top:603.80px" width="16" height="11" viewBox="0 0 16 11"><path d="M0.8 5.5 C3 1.8 5.5 0.8 8 0.8 C10.5 0.8 13 1.8 15.2 5.5 C13 9.2 10.5 10.2 8 10.2 C5.5 10.2 3 9.2 0.8 5.5Z" fill="none" stroke="#F5B496" stroke-width="1.2"/>
              <circle cx="8" cy="5.5" r="2" fill="none" stroke="#F5B496" stroke-width="1.2"/></svg>
<div class="t" style="left:1275px;top:603.80px;font-size:14px;color:#37444E">Viewed <b style="margin:0 3px 0 2px">$490K</b> - 2003 Barka Dr 23434</div>
<div class="a" style="left:362px;top:661.66px;width:20.5px;height:20.5px;border:1.4px solid #D9DFE4;border-radius:4px;background:#FFFFFF"></div>
<div class="a" style="left:393px;top:656.46px;width:31.5px;height:31.5px;border-radius:50%;background:#B6CCB9"></div>
<div class="t" style="left:393px;top:666.46px;width:31.5px;text-align:center;font-size:12.5px;color:#FFFFFF">DR</div>
<div class="t" style="left:435px;top:655.96px;font-size:14px;color:#37444E">Donna Roberson</div>
<div class="t" style="left:435px;top:674.96px;font-size:14px;color:#9BA7B0">Ylopo</div>
<svg class="a" style="left:628px;top:664.16px" width="17" height="17" viewBox="0 0 17 17"><circle cx="8.5" cy="8.5" r="8.5" fill="#3EC28F"/>
          <path d="M5.2 4.6 C5.6 4.2 6.3 4.2 6.6 4.7 L7.3 6 C7.5 6.4 7.4 6.8 7.1 7.1 L6.7 7.5 C7.1 8.6 8.2 9.8 9.4 10.3 L9.9 9.9 C10.2 9.6 10.6 9.5 11 9.7 L12.3 10.4 C12.8 10.7 12.8 11.4 12.4 11.8 L11.7 12.5 C10.9 13.2 9.5 12.9 7.9 11.6 C6.3 10.2 4.8 8.3 4.5 6.7 C4.4 5.9 4.6 5.2 5.2 4.6Z" fill="#FFFFFF"/></svg>
<svg class="a" style="left:650px;top:664.16px" width="17" height="17" viewBox="0 0 17 17"><circle cx="8.5" cy="8.5" r="8.5" fill="#7D92F8"/>
              <ellipse cx="8.7" cy="8" rx="4.6" ry="3.7" fill="#FFFFFF"/><path d="M5.3 9.5 L4.6 12.6 L8 10.8Z" fill="#FFFFFF"/></svg>
<div class="t" style="left:672px;top:666.46px;font-size:14px;color:#37444E">(336) 692-2991</div>
<svg class="a" style="left:806px;top:664.16px" width="17" height="17" viewBox="0 0 17 17"><circle cx="8.5" cy="8.5" r="8.5" fill="#7FD0F8"/>
          <rect x="4.8" y="5.8" width="7.4" height="5.4" fill="none" stroke="#FFFFFF" stroke-width="1.1"/><path d="M5 6.2 L8.5 8.8 L12 6.2" fill="none" stroke="#FFFFFF" stroke-width="1"/></svg>
<div class="t" style="left:828px;top:666.46px;font-size:14px;color:#37444E">tooie321@icloud.com</div>
<div class="t" style="left:1067.5px;top:666.46px;font-size:14px;color:#37444E">$242,0...</div>
<svg class="a" style="left:1151px;top:664.46px" width="15" height="15" viewBox="0 0 15 15"><circle cx="7.5" cy="7.5" r="6.4" fill="none" stroke="#7D868D" stroke-width="1.4"/>
          <path d="M7.5 3.8 V7.8 L10 10" fill="none" stroke="#7D868D" stroke-width="1.4"/></svg>
<div class="t" style="left:1171px;top:666.46px;font-size:14px;color:#37444E">Jan 28t...</div>
<svg class="a" style="left:1255px;top:666.46px" width="16" height="11" viewBox="0 0 16 11"><path d="M0.8 5.5 C3 1.8 5.5 0.8 8 0.8 C10.5 0.8 13 1.8 15.2 5.5 C13 9.2 10.5 10.2 8 10.2 C5.5 10.2 3 9.2 0.8 5.5Z" fill="none" stroke="#F5B496" stroke-width="1.2"/>
              <circle cx="8" cy="5.5" r="2" fill="none" stroke="#F5B496" stroke-width="1.2"/></svg>
<div class="t" style="left:1275px;top:666.46px;font-size:14px;color:#37444E">Visited Website</div>
<div class="a" style="left:362px;top:724.32px;width:20.5px;height:20.5px;border:1.4px solid #D9DFE4;border-radius:4px;background:#FFFFFF"></div>
<div class="a" style="left:393px;top:719.12px;width:31.5px;height:31.5px;border-radius:50%;background:#F9AA8B"></div>
<div class="t" style="left:393px;top:729.12px;width:31.5px;text-align:center;font-size:12.5px;color:#FFFFFF">NM</div>
<div class="t" style="left:435px;top:718.62px;font-size:14px;color:#37444E">Nestor Magallanes</div>
<div class="t" style="left:435px;top:737.62px;font-size:14px;color:#9BA7B0">Ylopo</div>
<svg class="a" style="left:628px;top:726.82px" width="17" height="17" viewBox="0 0 17 17"><circle cx="8.5" cy="8.5" r="8.5" fill="#3EC28F"/>
          <path d="M5.2 4.6 C5.6 4.2 6.3 4.2 6.6 4.7 L7.3 6 C7.5 6.4 7.4 6.8 7.1 7.1 L6.7 7.5 C7.1 8.6 8.2 9.8 9.4 10.3 L9.9 9.9 C10.2 9.6 10.6 9.5 11 9.7 L12.3 10.4 C12.8 10.7 12.8 11.4 12.4 11.8 L11.7 12.5 C10.9 13.2 9.5 12.9 7.9 11.6 C6.3 10.2 4.8 8.3 4.5 6.7 C4.4 5.9 4.6 5.2 5.2 4.6Z" fill="#FFFFFF"/></svg>
<svg class="a" style="left:650px;top:726.82px" width="17" height="17" viewBox="0 0 17 17"><circle cx="8.5" cy="8.5" r="8.5" fill="#7D92F8"/>
              <ellipse cx="8.7" cy="8" rx="4.6" ry="3.7" fill="#FFFFFF"/><path d="M5.3 9.5 L4.6 12.6 L8 10.8Z" fill="#FFFFFF"/></svg>
<div class="t" style="left:672px;top:729.12px;font-size:14px;color:#37444E">(479) 857-4251</div>
<svg class="a" style="left:806px;top:726.82px" width="17" height="17" viewBox="0 0 17 17"><circle cx="8.5" cy="8.5" r="8.5" fill="#7FD0F8"/>
          <rect x="4.8" y="5.8" width="7.4" height="5.4" fill="none" stroke="#FFFFFF" stroke-width="1.1"/><path d="M5 6.2 L8.5 8.8 L12 6.2" fill="none" stroke="#FFFFFF" stroke-width="1"/></svg>
<div class="t" style="left:828px;top:729.12px;font-size:14px;color:#37444E">elpotrio1@gmail.com</div>
<div class="t" style="left:1067.5px;top:729.12px;font-size:14px;color:#37444E">$175,000</div>
<svg class="a" style="left:1151px;top:727.12px" width="15" height="15" viewBox="0 0 15 15"><circle cx="7.5" cy="7.5" r="6.4" fill="none" stroke="#7D868D" stroke-width="1.4"/>
          <path d="M7.5 3.8 V7.8 L10 10" fill="none" stroke="#7D868D" stroke-width="1.4"/></svg>
<div class="t" style="left:1171px;top:729.12px;font-size:14px;color:#37444E">Jan 26t...</div>
<svg class="a" style="left:1255px;top:729.12px" width="16" height="11" viewBox="0 0 16 11"><path d="M0.8 5.5 C3 1.8 5.5 0.8 8 0.8 C10.5 0.8 13 1.8 15.2 5.5 C13 9.2 10.5 10.2 8 10.2 C5.5 10.2 3 9.2 0.8 5.5Z" fill="none" stroke="#F5B496" stroke-width="1.2"/>
              <circle cx="8" cy="5.5" r="2" fill="none" stroke="#F5B496" stroke-width="1.2"/></svg>
<div class="t" style="left:1275px;top:729.12px;font-size:14px;color:#37444E">Visited Website</div>
<div class="a" style="left:351px;top:577.90px;width:3px;height:62.66px;background:#4BABDD"></div>
<div class="a" style="left:1673.5px;top:212px;width:290.5px;height:359.5px;background:#FFFFFF;border-radius:5px;box-shadow:0 0 0 1px #E8ECF0, 0 1px 2px rgba(0,0,0,0.04)"></div>
<div class="a" style="left:1689px;top:228px;width:259px;height:41px;border:1.4px solid #D8DEE3;border-radius:4px;background:#FFFFFF"></div>
<div class="t" style="left:1701px;top:242px;font-size:14px;color:#A6B1B9">Add a filter</div>
<div class="a" style="left:1673.5px;top:285px;width:290.5px;height:2px;background:#E9ECEF"></div>
<div class="a" style="left:1673.5px;top:333.5px;width:290.5px;height:2px;background:#E9ECEF"></div>
<div class="a" style="left:1673.5px;top:381.5px;width:290.5px;height:2px;background:#E9ECEF"></div>
<div class="a" style="left:1673.5px;top:523.5px;width:290.5px;height:1.5px;background:#E9ECEF"></div>
<div class="a" style="left:1673.5px;top:525px;width:290.5px;height:46.5px;background:#FBFCFC;border-radius:0 0 5px 5px"></div>
<svg class="a" style="left:1690px;top:303.5px" width="15" height="13" viewBox="0 0 15 13"><rect x="0.8" y="0.8" width="13.4" height="4.5" rx="1.2" fill="none" stroke="#979FA5" stroke-width="1.3"/>
      <rect x="0.8" y="7.7" width="13.4" height="4.5" rx="1.2" fill="none" stroke="#979FA5" stroke-width="1.3"/></svg>
<div class="t" style="left:1710.5px;top:304px;font-size:14px;color:#4B5862">Stage includes any of: Lead</div>
<svg class="a" style="left:1937px;top:307px" width="11" height="7" viewBox="0 0 11 7"><path d="M1 1.5 L5.5 5.5 L10 1.5" stroke="#A1AAB1" stroke-width="1.3" fill="none"/></svg>
<svg class="a" style="left:1690px;top:352px" width="16" height="13" viewBox="0 0 16 13"><path d="M4 6.5 L8.5 1.2 H15 V7 L9.5 12.5Z" fill="#979FA5"/><circle cx="12.3" cy="3.8" r="1" fill="#FFFFFF"/>
      <path d="M5.8 1.2 L0.9 6.7 L6 12" fill="none" stroke="#979FA5" stroke-width="1.1"/></svg>
<div class="t" style="left:1710.5px;top:352px;font-size:14px;color:#4B5862">Tags include all of: YPRIORITY</div>
<svg class="a" style="left:1937px;top:355px" width="11" height="7" viewBox="0 0 11 7"><path d="M1 1.5 L5.5 5.5 L10 1.5" stroke="#A1AAB1" stroke-width="1.3" fill="none"/></svg>
<svg class="a" style="left:1690px;top:399px" width="14" height="14" viewBox="0 0 14 14"><path d="M3.8 11.5 H0.8 V0.8 H11.8 V4.5" fill="none" stroke="#979FA5" stroke-width="1.2"/>
      <path d="M4.4 2.8 L13.6 8.4 L10 9.4 L12.9 12.7 L11.3 14 L8.5 10.6 L6.2 13.6Z" fill="#979FA5"/></svg>
<div class="t" style="left:1710.5px;top:400px;font-size:14px;color:#4B5862">Source includes any of: Ylopo</div>
<svg class="a" style="left:1937px;top:403px" width="11" height="7" viewBox="0 0 11 7"><path d="M1 5.5 L5.5 1.5 L10 5.5" stroke="#A1AAB1" stroke-width="1.3" fill="none"/></svg>
<div class="a" style="left:1690px;top:429.5px;width:21px;height:21px;border-radius:50%;background:#4DABDF"></div>
<div class="a" style="left:1697.5px;top:437px;width:6px;height:6px;border-radius:50%;background:#FFFFFF"></div>
<div class="t" style="left:1722px;top:434px;font-size:14px;color:#4B5862">include</div>
<div class="a" style="left:1721.5px;top:456px;width:78px;height:26.5px;border-radius:13.5px;background:#E9ECEF"></div>
<div class="t" style="left:1733.5px;top:464px;font-size:12px;color:#4A565F">Ylopo</div>
<svg class="a" style="left:1777px;top:464px" width="10" height="10" viewBox="0 0 10 10"><path d="M1 1 L9 9 M9 1 L1 9" stroke="#8E979E" stroke-width="1.3"/></svg>
<div class="a" style="left:1805px;top:455.5px;width:27px;height:27px;border-radius:50%;background:#4DABDF"></div>
<svg class="a" style="left:1811.5px;top:462px" width="14" height="14" viewBox="0 0 14 14"><path d="M7 1.5 V12.5 M1.5 7 H12.5" stroke="#FFFFFF" stroke-width="2"/></svg>
<div class="a" style="left:1690px;top:488px;width:21px;height:21px;border-radius:50%;border:1.4px solid #DDE2E6;background:#FFFFFF"></div>
<div class="t" style="left:1722px;top:492px;font-size:14px;color:#4B5862">exclude</div>
<div class="t" style="left:1673.5px;top:541.5px;width:290.5px;text-align:center;font-size:14px;color:#A3AEB6">Clear filters</div>
<svg class="a" style="left:0;top:0" width="1985" height="773" viewBox="0 0 1985 773"><ellipse cx="1906" cy="171.5" rx="80" ry="40" fill="none" stroke="#FF0000" stroke-width="6.5" transform="rotate(1.5 1906 171.5)"/><ellipse cx="1723" cy="406" rx="40" ry="26.5" fill="none" stroke="#FF0000" stroke-width="6.5"/></svg>
</body></html>
